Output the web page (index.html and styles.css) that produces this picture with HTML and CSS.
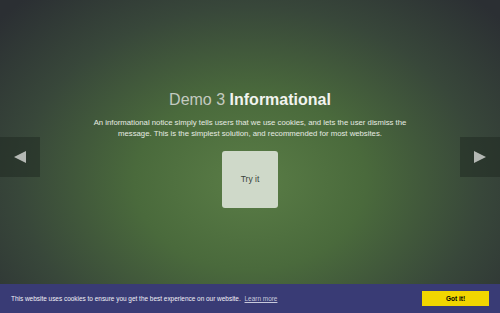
FILE: index.html
```html
<!DOCTYPE html>
<html>
<head>
<meta charset="utf-8">
<link rel="stylesheet" href="styles.css">
</head>
<body>
<div class="stage">
  <a class="nav nav-prev" href="#"><svg width="12" height="12" viewBox="0 0 12 12"><polygon points="12,0 12,12 0,6" fill="#b4b8b4"/></svg></a>
  <div class="content">
    <h1 class="title"><span class="light">Demo 3</span> <strong>Informational</strong></h1>
    <p class="desc">An informational notice simply tells users that we use cookies, and lets the user dismiss the message. This is the simplest solution, and recommended for most websites.</p>
    <button class="try">Try it</button>
  </div>
  <a class="nav nav-next" href="#"><svg width="12" height="12" viewBox="0 0 12 12"><polygon points="0,0 0,12 12,6" fill="#b4b8b4"/></svg></a>
</div>
<div class="cookie">
  <span class="msg">This website uses cookies to ensure you get the best experience on our website. <a class="learn" href="#">Learn more</a></span>
  <a class="gotit" href="#">Got it!</a>
</div>
</body>
</html>
```
FILE: styles.css
```css
html, body {
  margin: 0;
  padding: 0;
  width: 500px;
  height: 313px;
  overflow: hidden;
  font-family: "Liberation Sans", Arial, sans-serif;
}
.stage {
  position: relative;
  height: 313px;
  background: radial-gradient(ellipse 330px 250px at 50% 58%, #5a7d46 0%, #4a6a3c 35%, #38473a 70%, #2b2f33 100%);
  display: flex;
  justify-content: center;
}
.content {
  width: 330px;
  padding-top: 90px;
  display: flex;
  flex-direction: column;
  align-items: center;
  text-align: center;
}
.title {
  margin: 0;
  font-size: 16px;
  line-height: 20px;
  font-weight: normal;
  color: #c4cac0;
}
.title strong {
  color: #f2f4ef;
  font-weight: bold;
}
.desc {
  margin: 7px 0 0;
  font-size: 7.75px;
  line-height: 11px;
  color: #e6ebe2;
}
.try {
  margin-top: 12px;
  width: 56px;
  height: 57px;
  border: none;
  border-radius: 3px;
  background: #cfd9c9;
  color: #3a4239;
  font-family: "Liberation Sans", Arial, sans-serif;
  font-size: 8.5px;
  padding: 0 0 1px;
}
.nav {
  position: absolute;
  top: 137px;
  width: 40px;
  height: 40px;
  background: rgba(30, 40, 32, 0.5);
  display: flex;
  align-items: center;
  justify-content: center;
}
.nav-prev { left: 0; }
.nav-next { right: 0; }
.cookie {
  position: fixed;
  left: 0;
  right: 0;
  bottom: 0;
  height: 29px;
  background: #393b75;
  display: flex;
  align-items: center;
  justify-content: space-between;
  padding: 0 11px;
}
.msg {
  font-size: 6.45px;
  color: #f2f2f6;
}
.learn {
  color: #c8c9dc;
  margin-left: 2px;
}
.gotit {
  width: 67px;
  height: 15px;
  background: #f1d600;
  color: #000;
  font-size: 6.5px;
  font-weight: bold;
  text-decoration: none;
  display: flex;
  align-items: center;
  justify-content: center;
}
```
